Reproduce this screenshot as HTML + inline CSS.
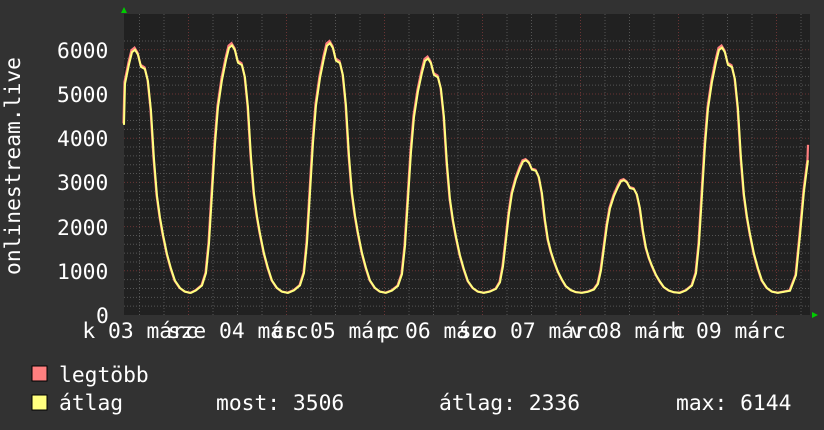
<!DOCTYPE html>
<html><head><meta charset="utf-8"><style>
html,body{margin:0;padding:0;background:#323232;}
svg{display:block}
text{font-family:"DejaVu Sans Mono","Liberation Mono",monospace;font-size:21.3px;fill:#fff}
</style></head><body>
<svg id="g" width="824" height="430" xmlns="http://www.w3.org/2000/svg">
<rect width="824" height="430" fill="#323232"/>
<rect x="124" y="14" width="686" height="301" fill="#212121"/>
<g id="grid"></g>
<path id="maxp" fill="none" stroke="#ff7f7f" stroke-width="2.2"/>
<path id="avgp" fill="none" stroke="#ffff7f" stroke-width="2"/>
<polygon points="121,13 127,13 124,7" fill="#00cc00"/>
<polygon points="812,312 812,318 818,315" fill="#00cc00"/>
<text x="57" y="58">6000</text>
<text x="57" y="102">5000</text>
<text x="57" y="146">4000</text>
<text x="57" y="190">3000</text>
<text x="57" y="235">2000</text>
<text x="57" y="279">1000</text>
<text x="96" y="323">0</text>
<text transform="translate(20,275) rotate(-90)">onlinestream.live</text>
<g id="xl"></g>
<rect x="32" y="366" width="15" height="15" fill="#ff7f7f" stroke="#000" stroke-width="1"/>
<rect x="32" y="395" width="15" height="15" fill="#ffff7f" stroke="#000" stroke-width="1"/>
<text x="59" y="382">legtöbb</text>
<text x="59" y="410">átlag</text>
<text x="216" y="410">most: 3506</text>
<text x="439" y="410">átlag: 2336</text>
<text x="676" y="410">max: 6144</text>
</svg>
<script>
var g=document.getElementById('grid'),s='';
function Y(v){return 315-v*0.0442;}
for(var v=200;v<=6200;v+=200){var y=Y(v);if(y<14)break;var maj=v%1000==0;
s+='<line x1="124" x2="810" y1="'+y+'" y2="'+y+'" stroke="'+(maj?'#6a3434':'#555')+'" stroke-dasharray="1,2"/>';}
for(var x=139.5;x<810;x+=24.5){var k=Math.round((x-139.5)/24.5);var maj=(k%4==2);
s+='<line y1="14" y2="315" x1="'+x+'" x2="'+x+'" stroke="'+(maj?'#6a3434':'#555')+'" stroke-dasharray="1,2"/>';}
g.innerHTML=s;
var peaks=[[135,6000],[232,6100],[330,6150],[428,5800],[526,3500],[624,3050],[722,6050]];
var T=[[-42,0],[-36,.01],[-30,.03],[-26,.08],[-23,.2],[-20,.4],[-17,.6],[-14,.75],[-10,.86],[-6,.94],[-3,.99],[0,1],[3,.98],[6,.93],[10,.92],[13,.87],[16,.75],[19,.55],[22,.4],[25,.31],[28,.24],[32,.16],[36,.1],[40,.05],[45,.02],[50,.005],[56,0]];
var pts=[];
peaks.forEach(function(p,i){T.forEach(function(t){var x=p[0]+t[0];if(x<124)return;pts.push([x,500+(p[1]-500)*t[1]]);});});
pts.unshift([124,4300]);
pts.push([790,550],[796,900],[800,1800],[804,2800],[808,3500]);
pts.sort(function(a,b){return a[0]-b[0]});
var d='',dm='';pts.forEach(function(p,i){d+=(i?'L':'M')+p[0]+','+Y(p[1]).toFixed(1);dm+=(i?'L':'M')+(p[0]-.5)+','+(Y(p[1]*1.008)).toFixed(1);});
dm+='L808,'+Y(3850);
document.getElementById('maxp').setAttribute('d',dm);
document.getElementById('avgp').setAttribute('d',d);
var L=[['k',108,'03'],['sze',219,'04'],['cs',310,'05'],['p',405,'06'],['szo',510,'07'],['v',596,'08'],['h',696,'09']],h='';
L.forEach(function(l){h+='<text x="'+(l[1]-12.8)+'" y="338" text-anchor="end">'+l[0]+'</text><text x="'+l[1]+'" y="338">'+l[2]+' márc</text>';});
document.getElementById('xl').innerHTML=h;
</script>
</body></html>
